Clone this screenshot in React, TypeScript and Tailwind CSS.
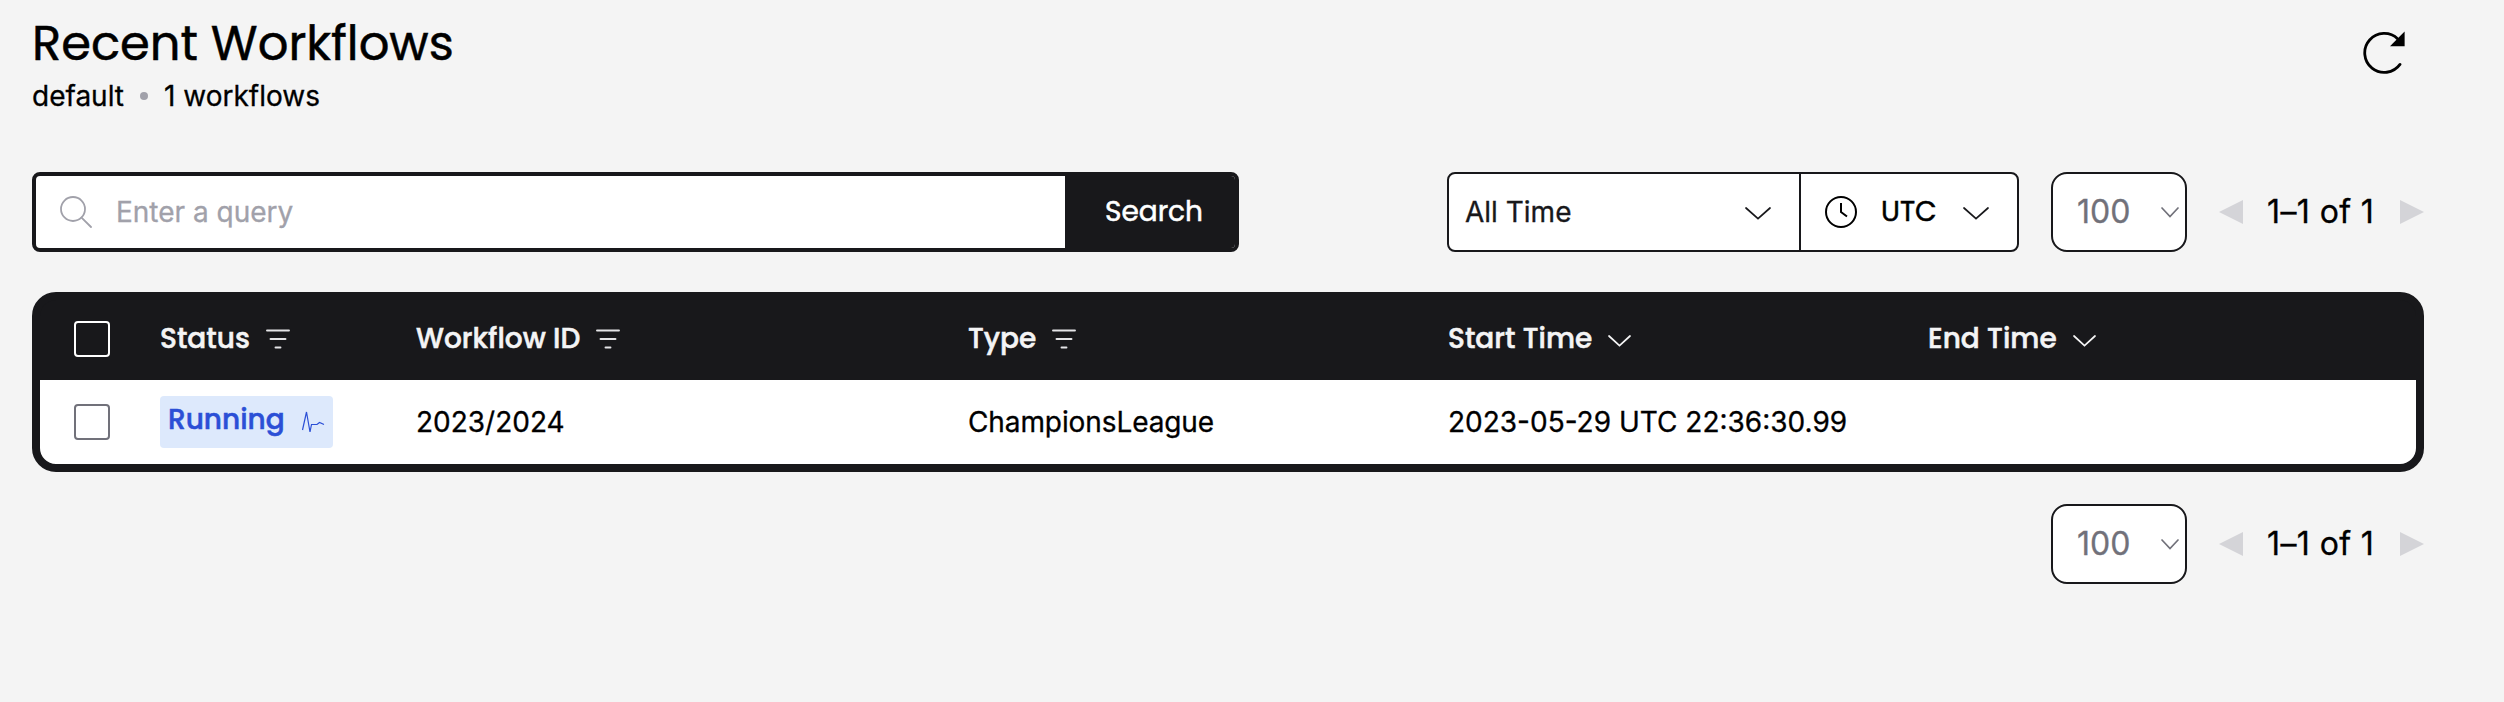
import React from 'react';

const heading = "font-[Poppins,Inter,sans-serif] [-webkit-text-stroke:0.5px_currentColor]";

function Checkbox({ className }: { className: string }) {
  return <span className={`size-9 shrink-0 rounded border-2 ${className}`} />;
}

function FilterIcon() {
  return (
    <svg width="24" height="20" viewBox="0 0 24 20" fill="none" stroke="#e4e4e7" strokeWidth="1.9" strokeLinecap="round">
      <path d="M1 1.5H23M4.5 10H19.5M9.5 18.5H14.5" />
    </svg>
  );
}

function Chevron({ w, h, stroke }: { w: number; h: number; stroke: string }) {
  return (
    <svg width={w} height={h} viewBox={`0 0 ${w} ${h}`} fill="none" stroke={stroke} strokeWidth={1.7} strokeLinecap="round">
      <path d={`M1 1L${w / 2} ${h - 1.4}L${w - 1} 1`} />
    </svg>
  );
}

function Pager() {
  return (
    <div className="flex items-center">
      <div className="flex h-20 w-[136px] items-center justify-between rounded-2xl border-2 border-[#18181b] bg-white pr-1.5 pl-6 text-[32px] text-[#71717a]">
        <span>100</span>
        <Chevron w={18} h={11} stroke="#71717a" />
      </div>
      <svg className="ml-8" width="24" height="24" viewBox="0 0 24 24" fill="#d4d4d8"><path d="M24 0V24L0 12Z" /></svg>
      <span className="ml-6 w-[109px] text-[32px] tracking-[0.4px] whitespace-nowrap">1–1 of 1</span>
      <svg className="ml-6" width="24" height="24" viewBox="0 0 24 24" fill="#d4d4d8"><path d="M0 0V24L24 12Z" /></svg>
    </div>
  );
}

function Head({ label, width, sort }: { label: string; width: string; sort?: boolean }) {
  return (
    <div className={`flex items-center gap-4 ${width}`}>
      <span className={`${heading} font-medium whitespace-nowrap`}>{label}</span>
      {sort ? <span className="flex pt-1"><Chevron w={23} h={12} stroke="#f4f4f5" /></span> : <FilterIcon />}
    </div>
  );
}

export default function App() {
  return (
    <div className="flex h-[702px] w-[2504px] flex-col bg-[#f4f4f4] pr-20 pl-8 font-[Inter,sans-serif] text-[28px] leading-10 text-black [-webkit-text-stroke:0.3px_currentColor]">
      <header className="flex h-[172px] justify-between">
        <div>
          <h1 className={`${heading} pt-2 text-[48px] leading-[72px] font-normal`}>Recent Workflows</h1>
          <p className="-mt-px flex items-center leading-[34px]">
            default<span className="mx-4 size-2 rounded-full bg-[#a1a1aa]" />1 workflows
          </p>
        </div>
        <svg className="mt-[31px] mr-[19px]" width="43" height="43" viewBox="0 0 43 43" fill="none" stroke="#000" strokeWidth="2.8" strokeLinecap="round">
          <path d="M35.8 7.9A19.5 19.5 0 1 0 38 33.4" />
          <path d="M42.6 .5V15.3H28Z" fill="#000" stroke="none" />
        </svg>
      </header>

      <div className="flex h-20 items-center">
        <div className="flex h-20 w-[1207px] overflow-hidden rounded-lg border-4 border-[#18181b] bg-white">
          <div className="flex flex-1 items-center gap-6 pl-6 text-[#a1a1aa]">
            <svg width="32" height="32" viewBox="0 0 32 32" fill="none" stroke="#a1a1aa" strokeWidth="1.8" strokeLinecap="round">
              <circle cx="13" cy="13" r="12" /><path d="M21.8 21.8L31 31" />
            </svg>
            Enter a query
          </div>
          <div className={`flex w-[170px] items-center justify-center bg-[#18181b] pl-2 font-normal text-white ${heading}`}>Search</div>
        </div>
        <div className="ml-52 flex h-20 w-[572px] rounded-lg border-2 border-[#18181b] bg-white">
          <div className="flex w-[352px] items-center justify-between border-r-2 border-[#18181b] pr-7 pl-4 text-[#18181b]">
            All Time
            <span className="flex pt-0.5"><Chevron w={26} h={13} stroke="#18181b" /></span>
          </div>
          <div className="flex flex-1 items-center pl-6">
            <svg width="32" height="32" viewBox="0 0 32 32" fill="none" stroke="#000" strokeWidth="2">
              <circle cx="16" cy="16" r="15" /><path d="M16 7V16L22 20.5" />
            </svg>
            <span className={`mr-[26px] ml-6 w-[56px] font-normal ${heading}`}>UTC</span>
            <span className="flex pt-0.5"><Chevron w={26} h={13} stroke="#18181b" /></span>
          </div>
        </div>
        <div className="ml-8"><Pager /></div>
      </div>

      <div className="mt-10 h-[180px] w-[2392px] overflow-hidden rounded-3xl border-8 border-[#18181b] bg-[linear-gradient(#18181b_80px,#ffffff_80px)]">
        <div className="flex h-20 items-center pb-0.5 pl-[34px] text-[#f4f4f5]">
          <Checkbox className="mr-[50px] border-white" />
          <Head label="Status" width="w-[256px]" />
          <Head label="Workflow ID" width="w-[552px]" />
          <Head label="Type" width="w-[480px]" />
          <Head label="Start Time" width="w-[480px]" sort />
          <Head label="End Time" width="w-[400px]" sort />
        </div>
        <div className="flex h-[84px] items-center pl-[34px]">
          <Checkbox className="mr-[50px] border-[#71717a]" />
          <div className="w-[256px]">
            <span className="flex h-[52px] w-[173px] items-center justify-between rounded bg-[#dde9fc] px-2 text-[#2b4fd6]">
              <span className={`${heading} pb-[5px] font-medium`}>Running</span>
              <svg width="24" height="24" viewBox="0 0 24 24" fill="none" stroke="#2b4fd6" strokeWidth="1.2">
                <path d="M1.5 20L5.5 2L9 22L10.5 14.5H16L18.5 12.5L23 14.5" />
              </svg>
            </span>
          </div>
          <span className="w-[552px]">2023/2024</span>
          <span className="w-[480px] tracking-[-0.1px]">ChampionsLeague</span>
          <span className="w-[480px] whitespace-nowrap">2023-05-29 UTC 22:36:30.99</span>
        </div>
      </div>

      <div className="mt-8 flex w-[2392px] justify-end"><Pager /></div>
    </div>
  );
}
